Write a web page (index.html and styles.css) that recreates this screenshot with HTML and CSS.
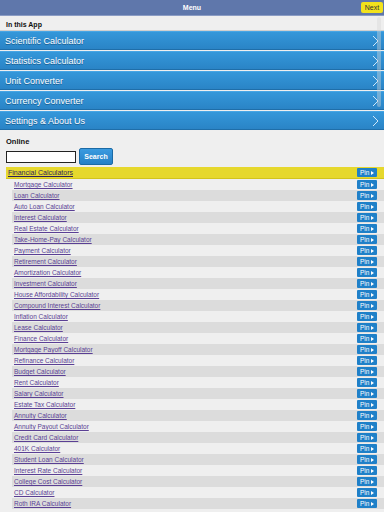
FILE: index.html
```html
<!DOCTYPE html>
<html lang="en">

<head>
  <meta charset="UTF-8">
  <meta name="viewport" content="width=device-width, initial-scale=1.0">
  <title>Menu</title>
  <link rel="stylesheet" href="styles.css">
</head>

<body>
  <div class="topbar">
    <span class="title">Menu</span>
    <a class="next" href="#">Next</a>
  </div>

  <div class="scroll-thumb"></div>

  <div class="section-title">In this App</div>
  <ul class="nav">
    <li><span>Scientific Calculator</span><svg class="chev" width="8" height="12" viewBox="0 0 8 12"><polyline points="1,1 6,6 1,11" /></svg></li>
    <li><span>Statistics Calculator</span><svg class="chev" width="8" height="12" viewBox="0 0 8 12"><polyline points="1,1 6,6 1,11" /></svg></li>
    <li><span>Unit Converter</span><svg class="chev" width="8" height="12" viewBox="0 0 8 12"><polyline points="1,1 6,6 1,11" /></svg></li>
    <li><span>Currency Converter</span><svg class="chev" width="8" height="12" viewBox="0 0 8 12"><polyline points="1,1 6,6 1,11" /></svg></li>
    <li><span>Settings &amp; About Us</span><svg class="chev" width="8" height="12" viewBox="0 0 8 12"><polyline points="1,1 6,6 1,11" /></svg></li>
  </ul>

  <div class="online">
    <div class="online-title">Online</div>
    <form class="search">
      <input type="text">
      <button type="button">Search</button>
    </form>
  </div>

  <div class="cat">
    <a href="#">Financial Calculators</a>
    <span class="pin">Pin<i></i></span>
  </div>
  <ul class="calc-list">
    <li><a href="#">Mortgage Calculator</a><span class="pin">Pin<i></i></span></li>
    <li><a href="#">Loan Calculator</a><span class="pin">Pin<i></i></span></li>
    <li><a href="#">Auto Loan Calculator</a><span class="pin">Pin<i></i></span></li>
    <li><a href="#">Interest Calculator</a><span class="pin">Pin<i></i></span></li>
    <li><a href="#">Real Estate Calculator</a><span class="pin">Pin<i></i></span></li>
    <li><a href="#">Take-Home-Pay Calculator</a><span class="pin">Pin<i></i></span></li>
    <li><a href="#">Payment Calculator</a><span class="pin">Pin<i></i></span></li>
    <li><a href="#">Retirement Calculator</a><span class="pin">Pin<i></i></span></li>
    <li><a href="#">Amortization Calculator</a><span class="pin">Pin<i></i></span></li>
    <li><a href="#">Investment Calculator</a><span class="pin">Pin<i></i></span></li>
    <li><a href="#">House Affordability Calculator</a><span class="pin">Pin<i></i></span></li>
    <li><a href="#">Compound Interest Calculator</a><span class="pin">Pin<i></i></span></li>
    <li><a href="#">Inflation Calculator</a><span class="pin">Pin<i></i></span></li>
    <li><a href="#">Lease Calculator</a><span class="pin">Pin<i></i></span></li>
    <li><a href="#">Finance Calculator</a><span class="pin">Pin<i></i></span></li>
    <li><a href="#">Mortgage Payoff Calculator</a><span class="pin">Pin<i></i></span></li>
    <li><a href="#">Refinance Calculator</a><span class="pin">Pin<i></i></span></li>
    <li><a href="#">Budget Calculator</a><span class="pin">Pin<i></i></span></li>
    <li><a href="#">Rent Calculator</a><span class="pin">Pin<i></i></span></li>
    <li><a href="#">Salary Calculator</a><span class="pin">Pin<i></i></span></li>
    <li><a href="#">Estate Tax Calculator</a><span class="pin">Pin<i></i></span></li>
    <li><a href="#">Annuity Calculator</a><span class="pin">Pin<i></i></span></li>
    <li><a href="#">Annuity Payout Calculator</a><span class="pin">Pin<i></i></span></li>
    <li><a href="#">Credit Card Calculator</a><span class="pin">Pin<i></i></span></li>
    <li><a href="#">401K Calculator</a><span class="pin">Pin<i></i></span></li>
    <li><a href="#">Student Loan Calculator</a><span class="pin">Pin<i></i></span></li>
    <li><a href="#">Interest Rate Calculator</a><span class="pin">Pin<i></i></span></li>
    <li><a href="#">College Cost Calculator</a><span class="pin">Pin<i></i></span></li>
    <li><a href="#">CD Calculator</a><span class="pin">Pin<i></i></span></li>
    <li><a href="#">Roth IRA Calculator</a><span class="pin">Pin<i></i></span></li>
  </ul>
</body>

</html>
```

FILE: styles.css
```css
body {
  font-family: 'Liberation Sans', Arial, sans-serif;
  background-color: #efefef;
  margin: 0;
  overflow: hidden;
}

.topbar {
  position: relative;
  height: 15px;
  background-color: #5f77ab;
  border-bottom: 1px solid #8b9cc4;
  text-align: center;
  font-size: 7px;
  line-height: 15px;
}

.title {
  color: #fff;
  font-weight: bold;
}

.next {
  position: absolute;
  right: 1px;
  top: 2px;
  height: 11px;
  width: 22px;
  background-color: #f2e21c;
  border-radius: 2px;
  color: #333;
  font-size: 7px;
  line-height: 11px;
  text-align: center;
  text-decoration: none;
}

.scroll-thumb {
  position: absolute;
  right: 3px;
  top: 17px;
  width: 4px;
  height: 90px;
  border-radius: 2px;
  background-color: rgba(215, 215, 215, 0.4);
}

.section-title {
  height: 14px;
  padding-left: 6px;
  font-size: 7px;
  font-weight: bold;
  line-height: 18px;
  color: #111;
  border-bottom: 1px solid #cfcfcf;
}

.nav {
  list-style: none;
  margin: 0;
  padding: 0;
}

.nav li {
  display: flex;
  align-items: center;
  justify-content: space-between;
  height: 17px;
  margin-bottom: 1px;
  padding: 0 4px 0 5px;
  background: linear-gradient(#3497da, #2a84c6);
  border-top: 1px solid #47a5e4;
  border-bottom: 1px solid #1f6ea9;
  color: #fff;
  font-size: 9px;
  text-shadow: 0 1px 0 #1b5f92;
}

.chev polyline {
  fill: none;
  stroke: #cfe6f8;
  stroke-width: 1;
}

.online {
  padding: 6px 6px 2px;
}

.online-title {
  font-size: 7.5px;
  font-weight: bold;
  color: #111;
  margin-bottom: 2px;
}

.search {
  display: flex;
  align-items: center;
  gap: 3px;
  margin: 0;
}

.search input {
  width: 70px;
  height: 12px;
  margin: 0;
  padding: 0;
  border: 1px solid #222;
  background-color: #fff;
  box-sizing: border-box;
}

.search button {
  width: 34px;
  height: 17px;
  padding: 0;
  border: 1px solid #1b6aa5;
  border-radius: 2px;
  background: linear-gradient(#3b9be0, #2580c6);
  color: #fff;
  font-family: 'Liberation Sans', Arial, sans-serif;
  font-size: 7px;
  font-weight: bold;
}

.cat {
  display: flex;
  align-items: center;
  justify-content: space-between;
  height: 12px;
  margin-left: 6px;
  padding: 0 7px 0 2px;
  background-color: #e6d82d;
  border-bottom: 1px solid #d2c31e;
  box-sizing: border-box;
}

.cat a {
  color: #2e1f5c;
  font-size: 7px;
}

.calc-list {
  list-style: none;
  margin: 0;
  padding: 0;
}

.calc-list li {
  display: flex;
  align-items: center;
  justify-content: space-between;
  height: 11px;
  margin-left: 12px;
  padding: 0 7px 0 2px;
}

.calc-list li:nth-child(even) {
  background-color: #dcdcdc;
}

.calc-list a {
  color: #5a3f94;
  font-size: 6.5px;
}

.pin {
  display: flex;
  align-items: center;
  gap: 2px;
  height: 9px;
  width: 20px;
  box-sizing: border-box;
  padding-left: 3px;
  background-color: #1f80c8;
  border-radius: 1px;
  color: #fff;
  font-size: 6.5px;
}

.pin i {
  width: 0;
  height: 0;
  border-top: 2px solid transparent;
  border-bottom: 2px solid transparent;
  border-left: 3px solid #fff;
}
```
